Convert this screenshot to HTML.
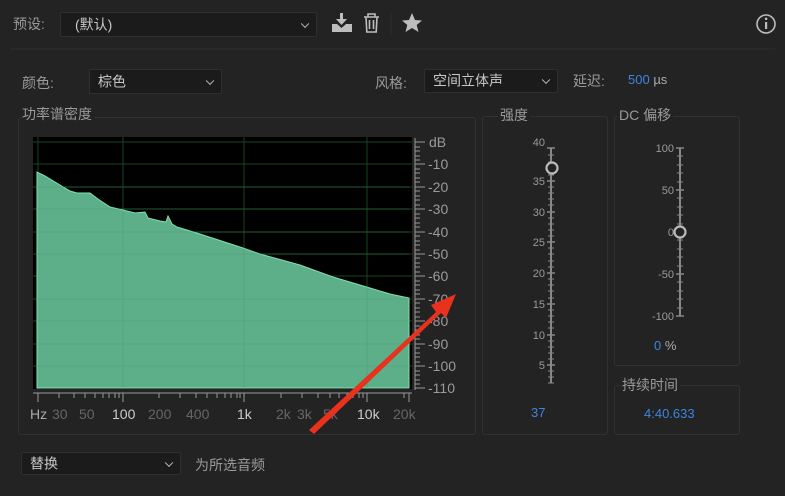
<!DOCTYPE html>
<html><head><meta charset="utf-8"><style>
body{margin:0;width:785px;height:496px;background:#232323;overflow:hidden;font-family:"Liberation Sans","Noto Sans CJK SC",sans-serif;color:#a9a9a9;position:relative}
.a{position:absolute;white-space:nowrap}
.dd{position:absolute;background:#1b1b1b;border:1px solid #2f2f2f;border-radius:2px;color:#c8c8c8;font-size:14px;box-sizing:border-box}
.dd span{position:absolute;top:50%;transform:translateY(-52%)}
.chev{position:absolute;right:8px;top:50%;width:5px;height:5px;border-right:1.5px solid #bbb;border-bottom:1.5px solid #bbb;transform:translateY(-70%) rotate(45deg)}
.box{position:absolute;border:1px solid #313131;border-radius:3px;box-sizing:border-box}
.lbl{font-size:14px;color:#9a9a9a}
.blue{color:#3a86e0}
</style></head><body>
<div class="a lbl" style="left:13px;top:14px">预设:</div>
<div class="dd" style="left:60px;top:12px;width:257px;height:25px"><span style="left:14px">(默认)</span><div class="chev"></div></div>
<svg class="a" style="left:0;top:0" width="785" height="496">
<g fill="#bdbdbd"><rect x="340" y="13" width="3" height="8"/><path d="M336 19 L347 19 L341.5 25 Z"/><path d="M332 24 L337 24 L341.5 28 L346 24 L352 24 L352 32 L332 32 Z"/></g>
<g fill="none" stroke="#bdbdbd" stroke-width="1.6"><path d="M364 17 L379 17 M368 17 L368 14 L375 14 L375 17 M366 17 L366.8 32 L376.2 32 L377 17 M369.5 20 L369.5 29 M373.5 20 L373.5 29"/></g>
<line x1="391" y1="12" x2="391" y2="36" stroke="#2e2e2e"/>
<path d="M412 13 L415 20 L422 20.5 L416.7 25 L418.5 32 L412 28 L405.5 32 L407.3 25 L402 20.5 L409 20 Z" fill="#bdbdbd"/>
<circle cx="766" cy="24" r="9" fill="none" stroke="#bdbdbd" stroke-width="1.6"/><rect x="765" y="22" width="2.2" height="7" fill="#bdbdbd"/><circle cx="766.1" cy="18.8" r="1.3" fill="#bdbdbd"/>
<line x1="10" y1="49" x2="775" y2="49" stroke="#2d2d2d"/>
</svg>
<div class="a lbl" style="left:22px;top:73px">颜色:</div>
<div class="dd" style="left:89px;top:69px;width:133px;height:25px"><span style="left:8px">棕色</span><div class="chev"></div></div>
<div class="a lbl" style="left:375px;top:73px">风格:</div>
<div class="dd" style="left:424px;top:69px;width:134px;height:24px"><span style="left:8px">空间立体声</span><div class="chev"></div></div>
<div class="a lbl" style="left:573px;top:71px">延迟:</div>
<div class="a" style="left:628px;top:72px;font-size:13px"><span class="blue">500</span> µs</div>

<div class="box" style="left:18px;top:117px;width:458px;height:318px"></div>
<div class="a lbl" style="left:22px;top:104px;background:#232323;padding-right:2px">功率谱密度</div>
<div class="box" style="left:482px;top:116px;width:126px;height:319px"></div>
<div class="a lbl" style="left:498px;top:105px;background:#232323;padding:0 2px">强度</div>
<div class="box" style="left:614px;top:116px;width:126px;height:250px"></div>
<div class="a lbl" style="left:617px;top:105px;background:#232323;padding:0 2px">DC 偏移</div>
<div class="box" style="left:614px;top:385px;width:126px;height:50px"></div>
<div class="a lbl" style="left:620px;top:375px;background:#232323;padding:0 2px">持续时间</div>
<div class="a blue" style="left:644px;top:406px;font-size:13px">4:40.633</div>
<div class="a blue" style="left:531px;top:405px;font-size:13px">37</div>
<div class="a" style="left:654px;top:338px;font-size:13px"><span class="blue">0</span> %</div>

<svg class="a" style="left:0;top:0" width="785" height="496" font-family="Liberation Sans,sans-serif" font-size="13" fill="#9a9a9a">
<rect x="33" y="137" width="379" height="252" fill="#000"/>
<g stroke="#14451e" stroke-width="1">
<line x1="38" y1="137" x2="38" y2="389"/><line x1="123" y1="137" x2="123" y2="389"/><line x1="244" y1="137" x2="244" y2="389"/><line x1="367" y1="137" x2="367" y2="389"/>
<line x1="33" y1="142" x2="412" y2="142"/><line x1="33" y1="164" x2="412" y2="164"/><line x1="33" y1="187" x2="412" y2="187"/><line x1="33" y1="209" x2="412" y2="209"/><line x1="33" y1="232" x2="412" y2="232"/><line x1="33" y1="254" x2="412" y2="254"/><line x1="33" y1="276" x2="412" y2="276"/><line x1="33" y1="299" x2="412" y2="299"/><line x1="33" y1="321" x2="412" y2="321"/><line x1="33" y1="344" x2="412" y2="344"/><line x1="33" y1="366" x2="412" y2="366"/>
</g>
<path d="M37 388 L37 172 L45 176 L60 185 L70 191 L77 193 L90 193 L98 199 L110 207 L123 210 L135 213 L145 212 L148 218 L160 221 L166 222 L168 216 L172 224 L177 227 L200 234 L243 248 L260 254 L300 265 L333 277 L370 288 L390 294 L409 298 L409 388 Z" fill="#5caf88" stroke="#7fe0b0" stroke-width="1"/>
<g stroke="#4d8f70" stroke-width="0.6" opacity="0.6"><line x1="123" y1="210" x2="123" y2="388"/><line x1="244" y1="248" x2="244" y2="388"/><line x1="367" y1="287" x2="367" y2="388"/><line x1="37" y1="299" x2="409" y2="299"/><line x1="37" y1="321" x2="409" y2="321"/><line x1="37" y1="344" x2="409" y2="344"/><line x1="37" y1="366" x2="409" y2="366"/><line x1="37" y1="254" x2="409" y2="254"/><line x1="37" y1="232" x2="409" y2="232"/><line x1="37" y1="209" x2="409" y2="209"/><line x1="37" y1="187" x2="409" y2="187"/></g>
<line x1="415" y1="138" x2="415" y2="390" stroke="#9a9a9a"/>
<g stroke="#9a9a9a">
<path d="M415 142h10M415 164h10M415 187h10M415 209h10M415 232h10M415 254h10M415 276h10M415 299h10M415 321h10M415 344h10M415 366h10M415 388h10"/>
<path d="M415 147h5M415 151h5M415 156h5M415 160h5M415 169h5M415 173h5M415 178h5M415 182h5M415 191h5M415 196h5M415 200h5M415 205h5M415 214h5M415 218h5M415 223h5M415 227h5M415 236h5M415 241h5M415 245h5M415 250h5M415 258h5M415 263h5M415 267h5M415 272h5M415 281h5M415 285h5M415 290h5M415 294h5M415 303h5M415 308h5M415 312h5M415 317h5M415 326h5M415 330h5M415 335h5M415 339h5M415 348h5M415 353h5M415 357h5M415 362h5M415 371h5M415 375h5M415 380h5M415 384h5"/>
</g>
<g font-size="14"><text x="429" y="147">dB</text><text x="428" y="169">-10</text><text x="428" y="192">-20</text><text x="428" y="214">-30</text><text x="428" y="237">-40</text><text x="428" y="259">-50</text><text x="428" y="281">-60</text><text x="428" y="304">-70</text><text x="428" y="326">-80</text><text x="428" y="349">-90</text><text x="428" y="371">-100</text><text x="428" y="393">-110</text></g>
<line x1="33" y1="393" x2="412" y2="393" stroke="#9a9a9a"/>
<path stroke="#9a9a9a" d="M38 393v9M59 393v5M74 393v5M85 393v5M95 393v5M103 393v5M109 393v5M115 393v5M119 393v5M123 393v9M159 393v5M180 393v5M196 393v5M207 393v5M217 393v5M225 393v5M231 393v5M237 393v5M240 393v5M244 393v9M281 393v5M302 393v5M318 393v5M330 393v5M339 393v5M347 393v5M353 393v5M359 393v5M363 393v5M367 393v9M404 393v5M409 393v9"/>
<g font-size="14"><text x="30" y="419" fill="#aaa">Hz</text><text x="52" y="419" fill="#666">30</text><text x="79" y="419" fill="#666">50</text><text x="112" y="419" fill="#ccc">100</text><text x="148" y="419" fill="#666">200</text><text x="186" y="419" fill="#666">400</text><text x="237" y="419" fill="#ccc">1k</text><text x="276" y="419" fill="#666">2k</text><text x="297" y="419" fill="#666">3k</text><text x="323" y="419" fill="#666">5k</text><text x="357" y="419" fill="#ccc">10k</text><text x="393" y="419" fill="#666">20k</text></g>
<path d="M309 430 L436 312 L431 305 L456 294 L446 318 L441 313 L314 434 Z" fill="#e8321e"/>
<line x1="551" y1="148" x2="551" y2="383" stroke="#888" stroke-width="2"/>
<g stroke="#888" stroke-width="1.5"><path d="M547 148h8M547 181h8M547 212h8M547 242h8M547 273h8M547 304h8M547 335h8M547 365h8"/></g>
<g stroke="#888" stroke-width="1"><path d="M548 155h6M548 162h6M548 168h6M548 175h6M548 187h6M548 193h6M548 199h6M548 205h6M548 218h6M548 224h6M548 230h6M548 236h6M548 248h6M548 254h6M548 261h6M548 267h6M548 279h6M548 285h6M548 291h6M548 298h6M548 310h6M548 316h6M548 322h6M548 328h6M548 341h6M548 347h6M548 353h6M548 359h6M548 371h6M548 377h6M548 383h6"/></g>
<circle cx="552" cy="168" r="5.5" fill="#232323" stroke="#bbb" stroke-width="2.2"/>
<g font-size="11" text-anchor="end"><text x="545" y="146">40</text><text x="545" y="185">35</text><text x="545" y="216">30</text><text x="545" y="246">25</text><text x="545" y="277">20</text><text x="545" y="308">15</text><text x="545" y="339">10</text><text x="545" y="369">5</text></g>
<line x1="680" y1="148" x2="680" y2="316" stroke="#888" stroke-width="2"/>
<g stroke="#888" stroke-width="1.5"><path d="M676 148h8M676 190h8M676 274h8M676 316h8"/></g>
<g stroke="#888" stroke-width="1"><path d="M677 156h6M677 165h6M677 173h6M677 182h6M677 198h6M677 207h6M677 215h6M677 224h6M677 240h6M677 249h6M677 257h6M677 266h6M677 282h6M677 291h6M677 299h6M677 308h6"/></g>
<circle cx="680" cy="232" r="5.5" fill="#232323" stroke="#bbb" stroke-width="2.2"/>
<g font-size="11" text-anchor="end"><text x="674" y="152">100</text><text x="674" y="194">50</text><text x="674" y="236">0</text><text x="674" y="278">-50</text><text x="674" y="320">-100</text></g>
</svg>
<div class="dd" style="left:21px;top:452px;width:160px;height:23px"><span style="left:8px">替换</span><div class="chev"></div></div>
<div class="a lbl" style="left:195px;top:455px">为所选音频</div>
</body></html>
